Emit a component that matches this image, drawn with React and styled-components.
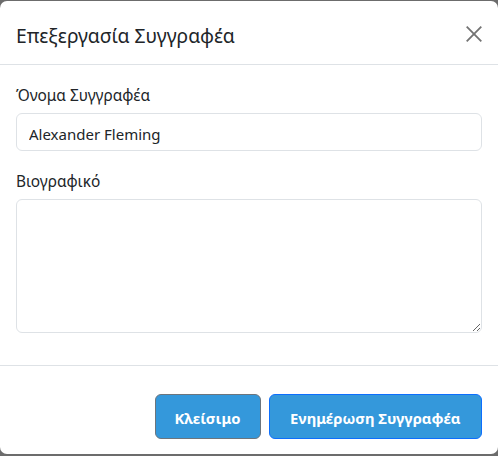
import React from "react";
import styled, { createGlobalStyle } from "styled-components";

const Global = createGlobalStyle`
  html, body { margin: 0; padding: 0; }
  body {
    background: #6c6c6c;
    font-family: "Noto Sans", "Open Sans", "DejaVu Sans", sans-serif;
    color: #212529;
    width: 498px;
    height: 456px;
    overflow: hidden;
  }
  * { box-sizing: border-box; }
`;

const Modal = styled.div`
  margin-top: 1px;
  width: 498px;
  background: #fff;
  border-radius: 7px;
  display: flex;
  flex-direction: column;
`;

const Header = styled.div`
  display: flex;
  align-items: center;
  justify-content: space-between;
  height: 64px;
  padding: 0 16px;
  border-bottom: 1px solid #dee2e6;
`;

const Title = styled.h5`
  margin: 0;
  padding-top: 7px;
  font-size: 19.3px;
  font-weight: 400;
  line-height: 26px;
  color: #212529;
`;

const CloseButton = styled.button`
  border: none;
  background: transparent;
  padding: 0;
  width: 16px;
  height: 16px;
  margin-top: 2px;
  margin-right: 0;
  display: flex;
  align-items: center;
  justify-content: center;
  cursor: pointer;
`;

const Body = styled.div`
  padding: 16px;
  border-bottom: 1px solid #dee2e6;
`;

const Field = styled.div`
  margin-bottom: 16px;
`;

const Label = styled.label`
  display: block;
  font-size: 15.4px;
  line-height: 24px;
  padding-top: 3px;
  margin-bottom: 5px;
  color: #212529;
`;

const Input = styled.input`
  display: block;
  width: 100%;
  height: 38px;
  padding: 8px 12px 4px;
  font-family: inherit;
  font-size: 15px;
  line-height: 24px;
  color: #212529;
  border: 1px solid #dee2e6;
  border-radius: 6px;
  outline: none;
`;

const TextArea = styled.textarea`
  display: block;
  width: 100%;
  height: 134px;
  padding: 6px 12px;
  font-family: inherit;
  font-size: 15px;
  border: 1px solid #dee2e6;
  border-radius: 6px;
  outline: none;
  resize: vertical;
`;

const Footer = styled.div`
  display: flex;
  justify-content: flex-end;
  gap: 8px;
  padding: 28px 16px 15px 16px;
`;

const Button = styled.button`
  height: 45px;
  padding: 2px ${(p) => p.$px}px 0;
  background: #3498db;
  color: #fff;
  font-family: inherit;
  font-size: 14.8px;
  font-weight: 700;
  border: 1px solid ${(p) => p.$border};
  border-radius: 6px;
  cursor: pointer;
`;

export default function App() {
  return (
    <>
      <Global />
      <Modal>
        <Header>
          <Title>Επεξεργασία Συγγραφέα</Title>
          <CloseButton aria-label="close">
            <svg width="16" height="16" viewBox="0 0 16 16">
              <path d="M0.7 0.7 L15.3 15.3 M15.3 0.7 L0.7 15.3" stroke="#737373" strokeWidth="1.8" fill="none" />
            </svg>
          </CloseButton>
        </Header>
        <Body>
          <Field>
            <Label>Όνομα Συγγραφέα</Label>
            <Input defaultValue="Alexander Fleming" />
          </Field>
          <Field>
            <Label>Βιογραφικό</Label>
            <TextArea />
          </Field>
        </Body>
        <Footer>
          <Button $px={19} $border="#6c757d">Κλείσιμο</Button>
          <Button $px={20.5} $border="#0d6efd">Ενημέρωση Συγγραφέα</Button>
        </Footer>
      </Modal>
    </>
  );
}
